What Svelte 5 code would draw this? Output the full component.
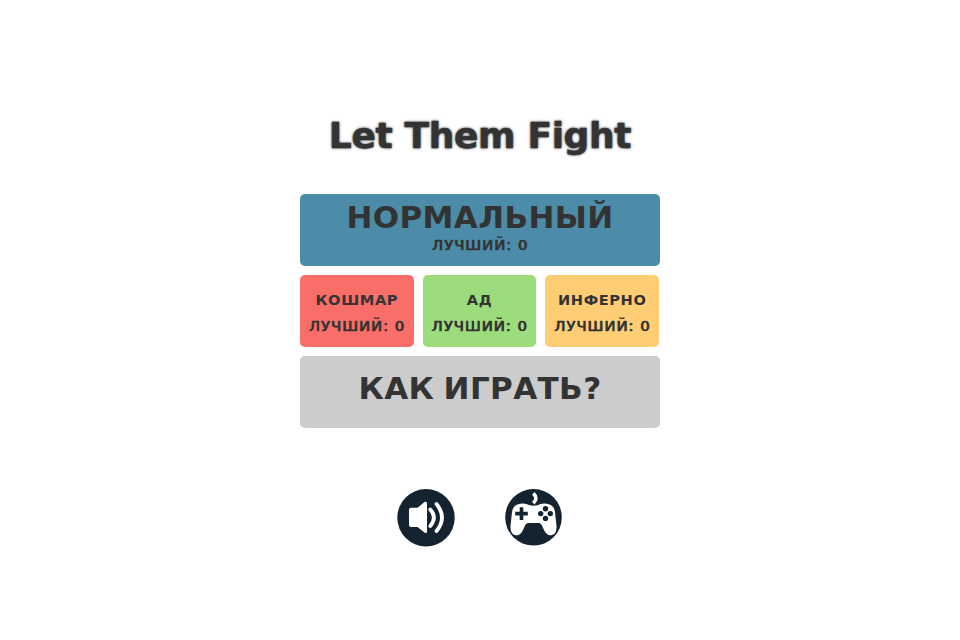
<script>
  const modes = [
    { name: 'КОШМАР', best: 0, tone: 'red' },
    { name: 'АД', best: 0, tone: 'green' },
    { name: 'ИНФЕРНО', best: 0, tone: 'amber' }
  ];
</script>

<main>
  <h1>Let Them Fight</h1>

  <button class="normal">
    <span class="big">НОРМАЛЬНЫЙ</span>
    <span class="best">ЛУЧШИЙ: 0</span>
  </button>

  <div class="modes">
    {#each modes as mode}
      <button class="mode {mode.tone}">
        <span class="name">{mode.name}</span>
        <span class="best">ЛУЧШИЙ: {mode.best}</span>
      </button>
    {/each}
  </div>

  <button class="help"><span class="big ask">КАК ИГРАТЬ?</span></button>

  <div class="icons">
    <button class="round" aria-label="Звук">
      <svg width="58" height="58" viewBox="0 0 58 58">
        <circle cx="29" cy="28.7" r="28.7" fill="#14232f" />
        <path d="M14 18.8H20.5L27.5 13Q30 12 30 14.5V42.5Q30 45 27.5 43.5L20.5 38H14Q12 38 12 36V20.800Q12 18.800 14 18.800Z" fill="#fff" />
        <g fill="none" stroke="#fff" stroke-width="3.8" stroke-linecap="round">
          <path d="M33.300 20.500Q40.500 28.500 33.300 37" />
          <path d="M39.500 15Q50.500 28.500 39.500 42" />
        </g>
      </svg>
    </button>
    <button class="round" aria-label="Игры">
      <svg width="57" height="57" viewBox="0 0 57 57">
        <circle cx="28.500" cy="28.300" r="28.300" fill="#14232f" />
        <path d="M28.300 4.300Q33.500 9 28.300 14.200" fill="none" stroke="#fff" stroke-width="3.600" />
        <path d="M12.500 15.500Q17 14 21.500 15Q24 16.800 28.500 16.800Q33 16.800 35.500 15Q40 14 44.500 15.500Q49 17 50 23L51.500 37Q52 45.500 46.500 46.200Q41.500 47 38.500 40Q36.500 34 34 34H23Q20.500 34 18.500 40Q15.500 47 10.500 46.200Q5 45.500 5.500 37L7 23Q8 17 12.500 15.500Z" fill="#fff" />
        <path d="M16.500 18.300V31M10.200 24.600H22.800" stroke="#14232f" stroke-width="3.600" />
        <g fill="#14232f">
          <circle cx="40.500" cy="19.800" r="2.700" />
          <circle cx="40.500" cy="29.400" r="2.700" />
          <circle cx="35.700" cy="24.600" r="2.700" />
          <circle cx="45.300" cy="24.600" r="2.700" />
        </g>
      </svg>
    </button>
  </div>
</main>

<style>
  :global(body) {
    background: #fff;
  }
  main {
    width: 360px;
    margin: 0 auto;
    padding-top: 115px;
    color: #333;
    font-family: "DejaVu Sans", sans-serif;
    font-weight: 700;
  }
  h1 {
    margin: 0 0 37px;
    text-align: center;
    font-size: 36px;
    line-height: 42px;
    letter-spacing: -0.35px;
    text-shadow: 0 0 3px #333;
    -webkit-text-stroke: 0.5px #333;
  }
  button {
    display: flex;
    flex-direction: column;
    align-items: center;
    box-sizing: border-box;
    padding: 0;
    border: 0;
    color: inherit;
    font: inherit;
    white-space: nowrap;
  }
  .normal,
  .help {
    width: 360px;
    height: 72px;
    border-radius: 5px;
  }
  .normal {
    background: #4c8ca8;
    padding-top: 5px;
  }
  .help {
    background: #ccc;
    padding-top: 14px;
  }
  .big {
    font-size: 31px;
    line-height: 36px;
    letter-spacing: 0.4px;
  }
  .ask {
    word-spacing: -2px;
  }
  .best,
  .name {
    font-size: 14.6px;
    line-height: 20px;
  }
  .name {
    letter-spacing: 0.6px;
  }
  .best {
    font-size: 14.8px;
    font-weight: 400;
    letter-spacing: 1px;
    -webkit-text-stroke: 0.3px #333;
    text-shadow: 0.7px 0 0 #333;
  }
  .modes {
    display: flex;
    gap: 9px;
    margin: 9px 0;
  }
  .mode {
    width: 113.7px;
    height: 72px;
    padding-top: 15px;
    gap: 6px;
    border-radius: 5px;
  }
  .red {
    background: #fa6e6a;
  }
  .green {
    background: #9cdc7c;
  }
  .amber {
    background: #ffcd74;
  }
  .icons {
    display: flex;
    gap: 50px;
    margin: 61px 0 0 97px;
  }
  .round {
    background: none;
  }
  svg {
    display: block;
  }
</style>
